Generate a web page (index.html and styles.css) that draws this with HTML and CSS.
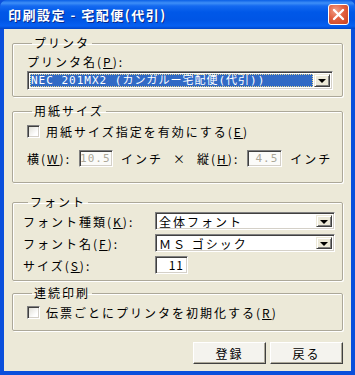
FILE: index.html
```html
<!DOCTYPE html>
<html>
  <head>
    <title>印刷設定</title>
    <meta charset="utf-8" />
    <link rel="stylesheet" href="styles.css">
  </head>
  <body>
    <div class="win">
      <div class="title">
        <span class="title-text">印刷設定 - 宅配便(代引)</span>
        <span class="close">
          <svg width="19" height="19" viewBox="0 0 19 19"><path d="M5 5 L14 14 M14 5 L5 14" stroke="#fff" stroke-width="2.4" stroke-linecap="round"/></svg>
        </span>
      </div>
      <div class="client">
        <fieldset class="grp g1">
          <legend>プリンタ</legend>
          <div class="lbl">プリンタ名(<u>P</u>):</div>
          <div class="combo printer">
            <span class="val sel"><span class="mono">NEC 201MX2 (カンガルー宅配便(代引))</span></span>
            <span class="drop"><i></i></span>
          </div>
        </fieldset>

        <fieldset class="grp g2">
          <legend>用紙サイズ</legend>
          <div class="chk-row">
            <span class="chk"></span>
            <span>用紙サイズ指定を有効にする(<u>E</u>)</span>
          </div>
          <div class="size-row">
            <span>横(<u>W</u>):</span>
            <span class="edit dis w1">10.5</span>
            <span class="unit">インチ</span>
            <span class="times">×</span>
            <span>縦(<u>H</u>):</span>
            <span class="edit dis w2">4.5</span>
            <span class="unit">インチ</span>
          </div>
        </fieldset>

        <fieldset class="grp g3">
          <legend>フォント</legend>
          <div class="frow">
            <span class="flbl">フォント種類(<u>K</u>):</span>
            <div class="combo font"><span class="val">全体フォント</span><span class="drop"><i></i></span></div>
          </div>
          <div class="frow">
            <span class="flbl">フォント名(<u>F</u>):</span>
            <div class="combo font"><span class="val">ＭＳ ゴシック</span><span class="drop"><i></i></span></div>
          </div>
          <div class="frow">
            <span class="flbl">サイズ(<u>S</u>):</span>
            <span class="edit fsize">11</span>
          </div>
        </fieldset>

        <fieldset class="grp g4">
          <legend>連続印刷</legend>
          <div class="chk-row">
            <span class="chk"></span>
            <span>伝票ごとにプリンタを初期化する(<u>R</u>)</span>
          </div>
        </fieldset>

        <div class="btns">
          <span class="btn">登録</span>
          <span class="btn">戻る</span>
        </div>
      </div>
    </div>
  </body>
</html>
```

FILE: styles.css
```css
*{
  margin:0;
  padding:0;
  box-sizing:border-box;
}
body{
  font-family:"Noto Sans CJK JP","Noto Sans",sans-serif;
  font-size:12px;
  color:#000;
  background:#fff;
}
u{
  text-decoration:underline;
  text-underline-offset:1px;
}
.win{
  width:355px;
  height:375px;
  background:#0a4fdc;
  display:flex;
  flex-direction:column;
}
.title{
  height:29px;
  flex:none;
  display:flex;
  align-items:center;
  justify-content:space-between;
  padding:0 6px 0 8px;
  background:linear-gradient(to bottom,#0a5fe6 0,#3e8ff7 3px,#1469f0 6px,#0058e8 12px,#0055e5 20px,#0660f2 26px,#0045c8 29px);
  border-radius:7px 7px 0 0;
}
.title-text{
  color:#fff;
  font-weight:bold;
  font-size:13px;
  letter-spacing:1.5px;
  text-shadow:1px 1px 0 #0a2a8a;
}
.close{
  width:21px;
  height:21px;
  border:1px solid #fff;
  border-radius:3px;
  background:radial-gradient(circle at 35% 30%,#f0a088 0,#e26040 45%,#c8401e 100%);
  display:flex;
  align-items:center;
  justify-content:center;
}
.client{
  flex:1;
  margin:0 4px 4px;
  background:#ece9d8;
  padding:7px 8px 0;
  display:flex;
  flex-direction:column;
}
.grp{
  border:1px solid #aca899;
  box-shadow:inset 1px 1px 0 #fff,1px 1px 0 #fff;
  border-radius:2px;
  min-width:0;
}
.grp legend{
  line-height:14px;
  padding:0 2px;
  margin-left:5px;
  letter-spacing:2px;
}
.g1{
  padding:5px 9px 6px 14px;
}
.g2{
  margin-top:7px;
  padding:5px 9px 15px 14px;
}
.g3{
  margin-top:12px;
  padding:3px 7px 6px 10px;
}
.g4{
  margin-top:5px;
  padding:4px 9px 10px 14px;
}
.lbl{
  line-height:14px;
  letter-spacing:2px;
}
.combo{
  display:flex;
  align-items:stretch;
  height:19px;
  background:#fff;
  border:1px solid;
  border-color:#808080 #fff #fff #808080;
  box-shadow:inset 1px 1px 0 #404040,inset -1px -1px 0 #d4d0c8;
  padding:2px;
}
.printer{
  margin-top:2px;
}
.val{
  flex:1;
  display:flex;
  align-items:center;
  letter-spacing:2px;
  white-space:nowrap;
  padding-left:1px;
  line-height:13px;
}
.sel{
  background:#316ac5;
  color:#fff;
  outline:1px dotted #e8d890;
  outline-offset:-1px;
  margin-right:1px;
}
.mono{
  font-family:"DejaVu Sans Mono","Noto Sans CJK JP",monospace;
  font-size:11px;
  letter-spacing:1px;
}
.drop{
  width:16px;
  flex:none;
  background:#ece9d8;
  border:1px solid;
  border-color:#ece9d8 #404040 #404040 #ece9d8;
  box-shadow:inset 1px 1px 0 #fff,inset -1px -1px 0 #808080;
  display:flex;
  align-items:center;
  justify-content:center;
}
.drop i{
  width:0;
  height:0;
  border-left:4px solid transparent;
  border-right:4px solid transparent;
  border-top:4px solid #000;
  margin-top:1px;
}
.chk-row{
  display:flex;
  align-items:center;
  height:16px;
  letter-spacing:2px;
}
.chk{
  width:13px;
  height:13px;
  flex:none;
  margin-right:6px;
  background:linear-gradient(135deg,#dcdbd2,#fff 70%);
  border:1px solid;
  border-color:#808080 #fff #fff #808080;
  box-shadow:inset 1px 1px 0 #404040,inset -1px -1px 0 #d4d0c8;
}
.size-row{
  display:flex;
  align-items:center;
  margin-top:11px;
  height:17px;
  letter-spacing:2px;
  white-space:nowrap;
}
.edit{
  height:17px;
  border:1px solid;
  border-color:#808080 #fff #fff #808080;
  box-shadow:inset 1px 1px 0 #404040,inset -1px -1px 0 #d4d0c8;
  background:#fff;
  text-align:right;
  padding-right:3px;
  line-height:15px;
  letter-spacing:1px;
  font-family:"DejaVu Sans Mono",monospace;
  font-size:11px;
}
.dis{
  background:#fbfbf9;
  color:#aca899;
}
.w1{
  width:34px;
  margin-left:8px;
  margin-right:8px;
}
.w2{
  width:35px;
  margin-left:8px;
  margin-right:8px;
}
.times{
  margin:0 10px 0 10px;
}
.frow{
  display:flex;
  align-items:center;
  height:18px;
  margin-top:4px;
  letter-spacing:2px;
}
.frow:first-of-type{
  margin-top:0;
}
.flbl{
  width:132px;
  flex:none;
  white-space:nowrap;
}
.font{
  flex:1;
  height:18px;
}
.fsize{
  width:33px;
  height:18px;
  line-height:16px;
  font-family:"Noto Sans CJK JP",sans-serif;
  font-size:12px;
}
.btns{
  display:flex;
  justify-content:flex-end;
  gap:4px;
  margin-top:11px;
}
.btn{
  width:73px;
  height:22px;
  display:flex;
  align-items:center;
  justify-content:center;
  letter-spacing:2px;
  background:#f4f3ee;
  border:1px solid;
  border-color:#fff #404040 #404040 #fff;
  box-shadow:inset -1px -1px 0 #aca899;
}
```
